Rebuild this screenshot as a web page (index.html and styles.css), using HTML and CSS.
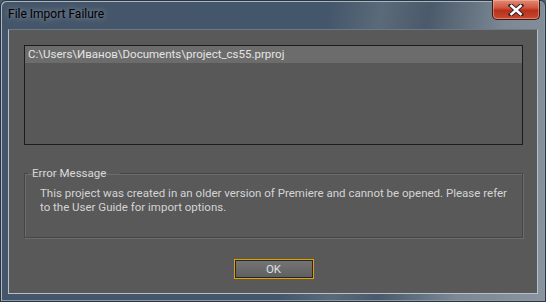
FILE: index.html
```html
<!DOCTYPE html>
<html lang="en">
<head>
    <meta charset="UTF-8">
    <meta name="viewport" content="width=device-width, initial-scale=1.0">
    <title>File Import Failure</title>
    <link rel="stylesheet" href="styles.css">
</head>
<body>
    <div class="window">
        <div class="titlebar">
            <span class="title">File Import Failure</span>
            <button class="close-btn" title="Close">
                <svg width="18" height="12" viewBox="0 0 18 12">
                    <path d="M4 1.5 L14 10.5 M14 1.5 L4 10.5" stroke="#3a2020" stroke-width="4.5" stroke-linecap="square"/>
                    <path d="M4.5 2 L13.5 10 M13.5 2 L4.5 10" stroke="#ffffff" stroke-width="2.6" stroke-linecap="square"/>
                </svg>
            </button>
        </div>
        <div class="client">
            <div class="file-list">
                <div class="file-row selected">C:\Users\Иванов\Documents\project_cs55.prproj</div>
            </div>
            <fieldset class="group">
                <legend>Error Message</legend>
                <p class="message">This project was created in an older version of Premiere and cannot be opened. Please refer to the User Guide for import options.</p>
            </fieldset>
            <div class="actions">
                <button class="ok-btn">OK</button>
            </div>
        </div>
    </div>
</body>
</html>
```

FILE: styles.css
```css
body {
    margin: 0;
    font-family: Roboto, "Noto Sans", sans-serif;
    font-size: 11.5px;
    background-color: #4a5b6c;
}
.window {
    width: 546px;
    height: 302px;
    box-sizing: border-box;
    display: flex;
    flex-direction: column;
    padding: 0 7px 7px 7px;
    background: linear-gradient(100deg, #45566a 0%, #44566a 55%, #5a6a79 64%, #4a5a6a 72%, #7c8894 85%, #8a949e 100%);
    border: 1px solid #2c3640;
    box-shadow: inset 1px 1px 0 #a8b6c4, inset -1px -1px 0 #8898a8;
    border-radius: 6px 6px 0 0;
}
.titlebar {
    height: 28px;
    flex-shrink: 0;
    display: flex;
    align-items: flex-start;
    justify-content: space-between;
}
.title {
    margin-top: 6px;
    color: #000;
    font-size: 12px;
    text-shadow: 0 0 6px rgba(255, 255, 255, 0.5);
}
.close-btn {
    width: 48px;
    height: 20px;
    margin-top: -1px;
    margin-right: -2px;
    padding: 0;
    display: flex;
    align-items: center;
    justify-content: center;
    border: 1px solid #3a1a14;
    border-top: none;
    border-radius: 0 0 5px 5px;
    background: linear-gradient(#e08a78 0%, #d0583f 40%, #b8301c 55%, #c94a30 100%);
    box-shadow: inset 0 0 0 1px rgba(255, 200, 180, 0.45);
}
.client {
    flex: 1;
    display: flex;
    flex-direction: column;
    padding: 15px 14px 14px 15px;
    background-color: #595959;
    border: 1px solid #b4c0cc;
    border-top-color: #6c7a88;
}
.file-list {
    height: 98px;
    flex-shrink: 0;
    background-color: #585858;
    border: 1px solid #1c1c1c;
}
.file-row {
    height: 17px;
    line-height: 16px;
    padding-left: 3px;
    color: #e4e4e4;
}
.file-row.selected {
    background-color: #6c6c6c;
}
.group {
    box-sizing: border-box;
    height: 72px;
    flex-shrink: 0;
    margin: 21px 0 0 0;
    padding: 0 10px 0 15px;
    border: 1px solid #464646;
    box-shadow: 1px 1px 0 #6c6c6c, inset 1px 1px 0 #6c6c6c;
}
.group legend {
    margin-left: -12px;
    padding: 0 14px 0 4px;
    color: #d8d8d8;
}
.message {
    margin: 6px 0 0 0;
    line-height: 14px;
    color: #d4d4d4;
}
.actions {
    display: flex;
    justify-content: center;
    margin-top: 21px;
}
.ok-btn {
    width: 80px;
    height: 20px;
    padding: 0;
    font-family: Roboto, "Noto Sans", sans-serif;
    font-size: 11.5px;
    color: #dde0e6;
    border: 1px solid #e5a000;
    background: linear-gradient(#767676, #5e5e5e);
    box-shadow: inset 0 0 0 1px #262626;
}
```
